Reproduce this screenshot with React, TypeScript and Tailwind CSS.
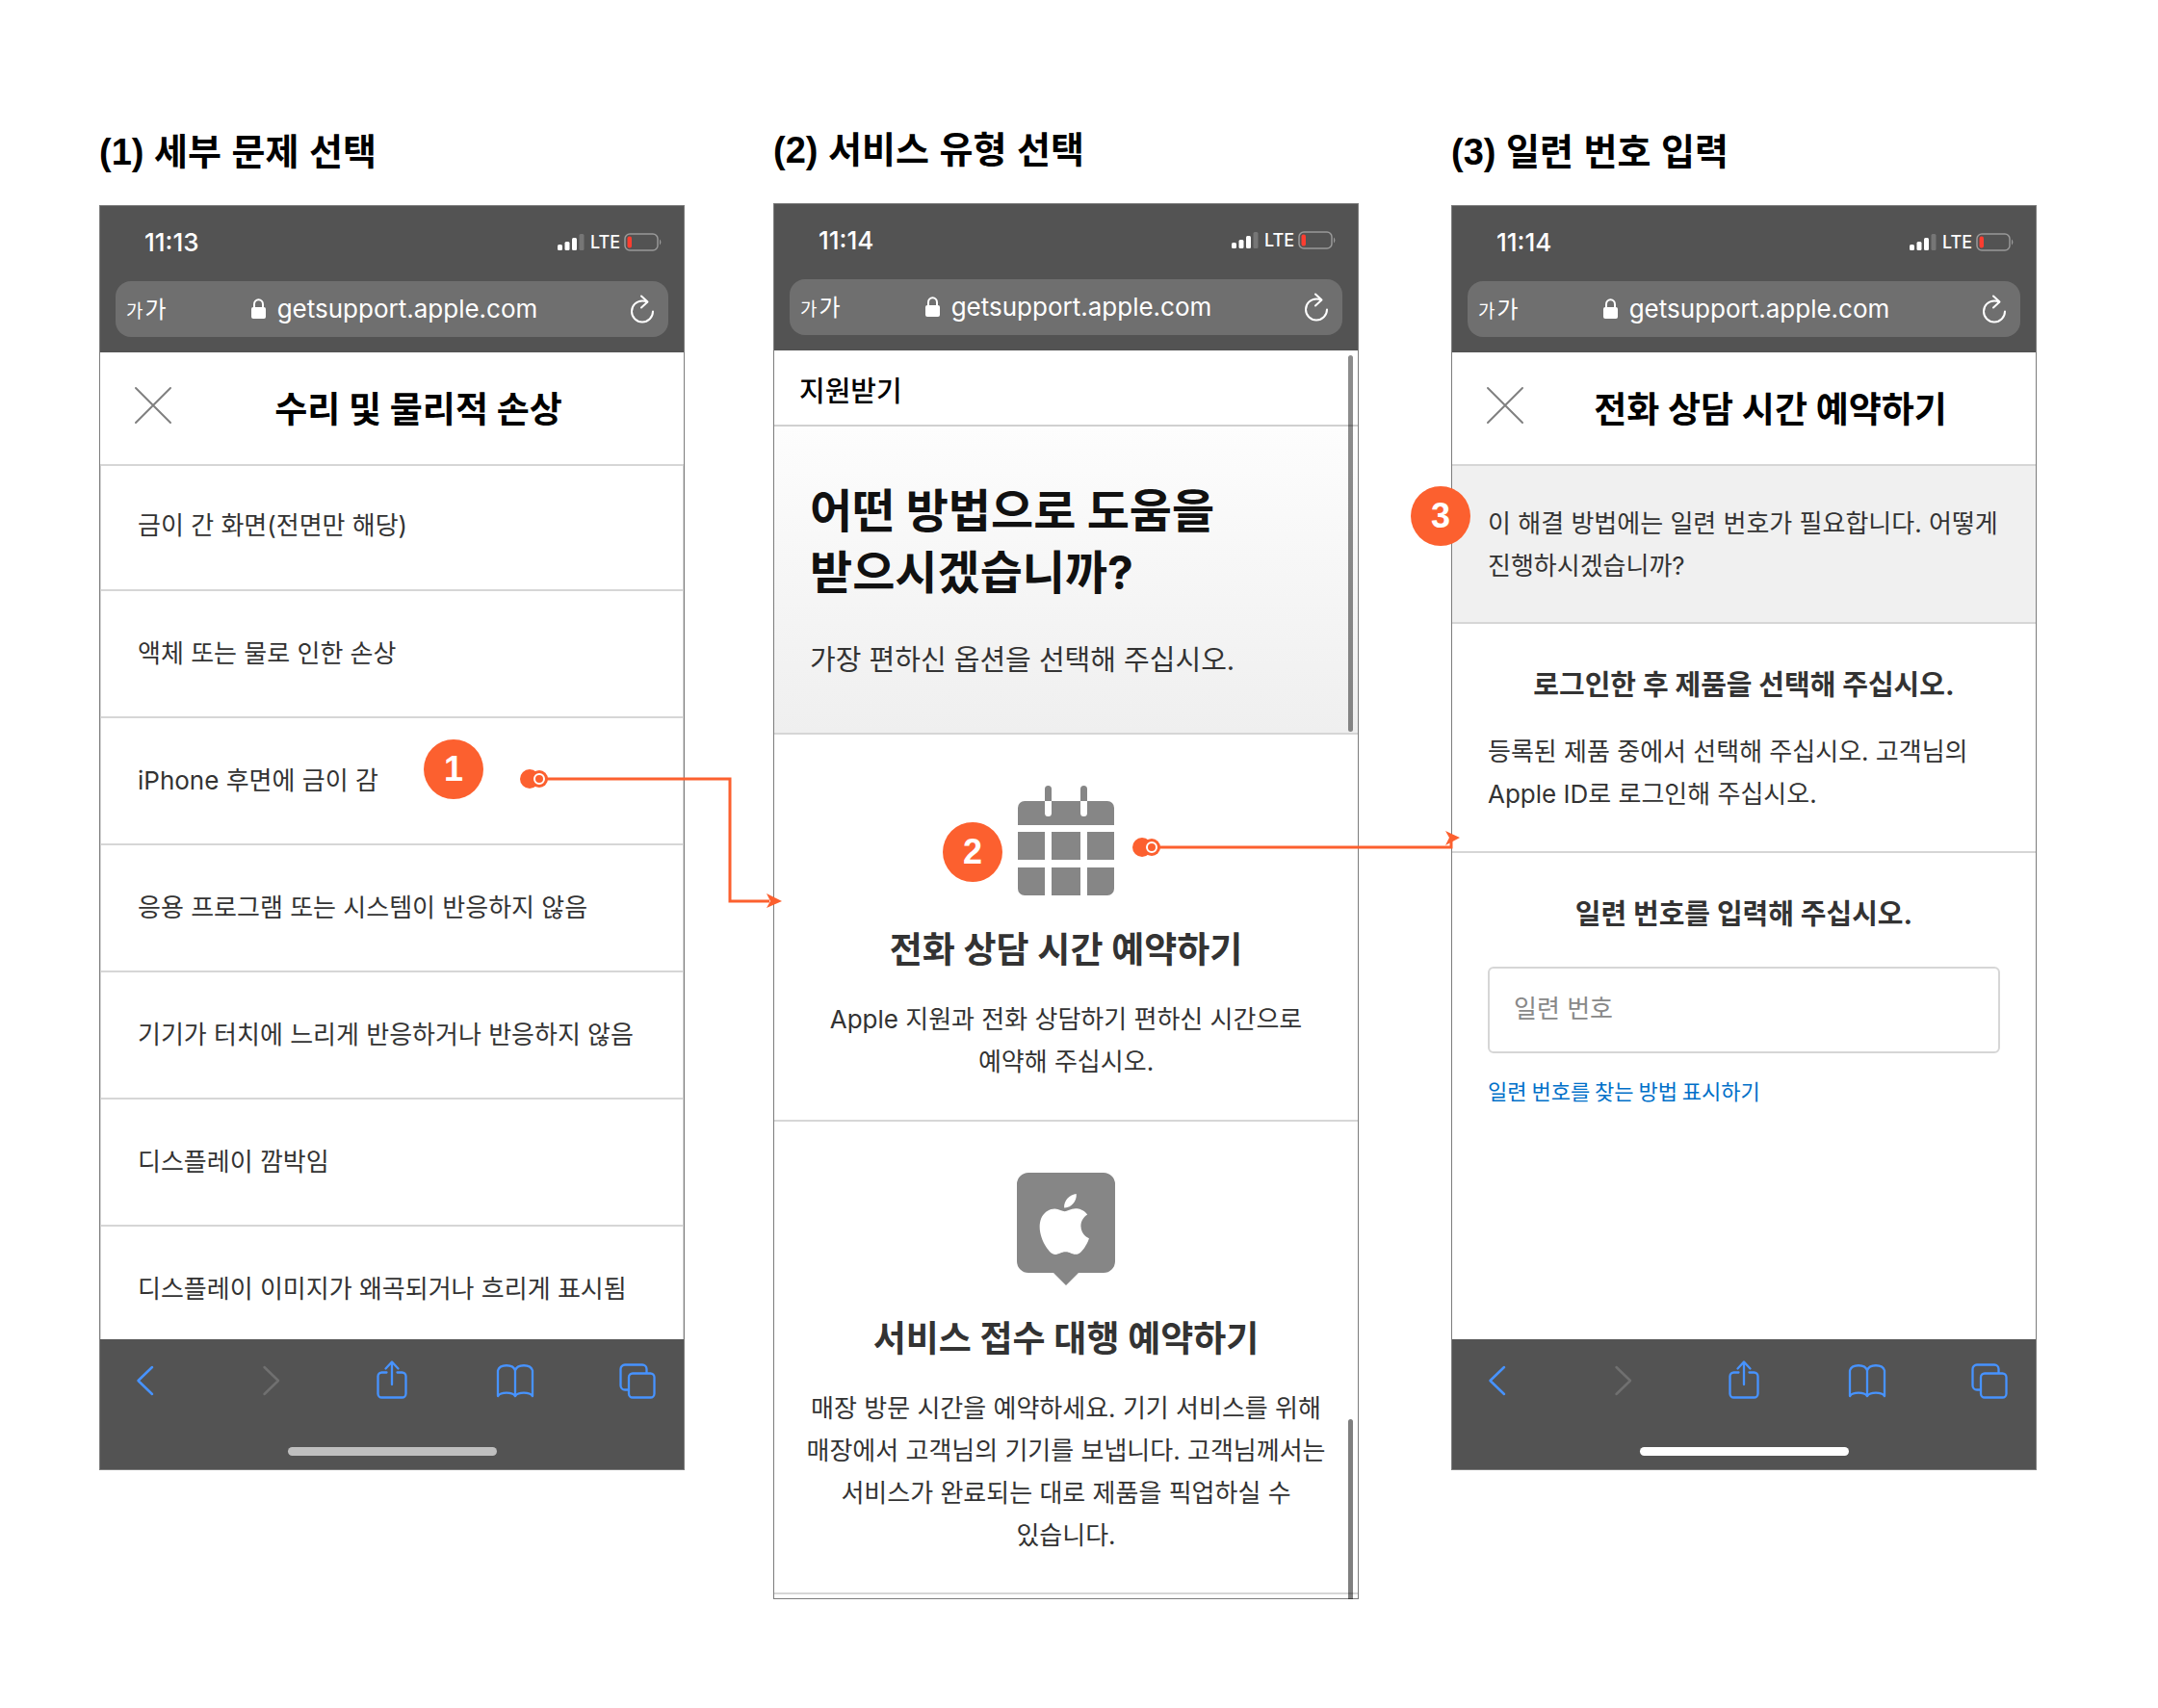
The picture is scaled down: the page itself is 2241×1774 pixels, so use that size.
import type { ReactNode } from "react";

type PhoneProps = { time: string; children: ReactNode };

function SignalIcon() {
  return (
    <svg width="28" height="18" viewBox="0 0 28 18" fill="#fff" aria-hidden="true">
      <rect x="0" y="11" width="5" height="6" rx="1.5" />
      <rect x="7.5" y="8" width="5" height="9" rx="1.5" />
      <rect x="15" y="4" width="5" height="13" rx="1.5" />
      <rect x="22.5" y="0" width="5" height="17" rx="1.5" fill="#767676" />
    </svg>
  );
}

function BatteryIcon() {
  return (
    <svg width="40" height="20" viewBox="0 0 40 20" aria-hidden="true">
      <rect x="1" y="1" width="34" height="17" rx="5" fill="none" stroke="#999" strokeWidth="1.5" />
      <rect x="3.5" y="3.5" width="4.5" height="12" rx="2" fill="#fc3d30" />
      <path d="M37 6.5a4 4 0 0 1 0 6z" fill="#999" />
    </svg>
  );
}

function LockIcon() {
  return (
    <svg width="15" height="22" viewBox="0 0 15 22" aria-hidden="true">
      <rect x="0" y="9" width="15" height="12" rx="2" fill="#fff" />
      <path d="M3 10V6a4.5 4.8 0 0 1 9 0v4" fill="none" stroke="#fff" strokeWidth="2" />
    </svg>
  );
}

function ReloadIcon() {
  return (
    <svg width="26" height="30" viewBox="0 0 26 30" fill="none" stroke="#fff" strokeWidth="2" strokeLinecap="round" strokeLinejoin="round" aria-hidden="true">
      <path d="M18 7.6C16.6 6.8 14.8 6.4 13 6.4A11 11 0 1 0 24 17.4" />
      <path d="M12 1.5L18.5 7.6L12 13.5" />
    </svg>
  );
}

function CloseButton() {
  return (
    <button type="button" aria-label="닫기" className="shrink-0">
      <svg width="40" height="40" viewBox="0 0 40 40" fill="none" stroke="#808080" strokeWidth="2" strokeLinecap="round">
        <path d="M2 2L38 38M38 2L2 38" />
      </svg>
    </button>
  );
}

function BrowserBar({ time }: { time: string }) {
  return (
    <header className="bg-[#535353] px-4 pb-4 pt-[22px] text-white">
      <div className="flex h-8 items-center justify-between pl-[30px] pr-[6px]">
        <span className="text-[26px] font-medium leading-8">{time}</span>
        <span className="flex items-center gap-[6px]">
          <SignalIcon />
          <span className="w-[29px] text-[18px] font-medium leading-8">LTE</span>
          <BatteryIcon />
        </span>
      </div>
      <div className="mt-[24px] flex h-[58px] items-center justify-between rounded-2xl bg-[#6f6f6f] pl-[11px] pr-[14px]">
        <button type="button" className="flex w-12 items-baseline gap-[2px] pt-1 leading-8" aria-label="텍스트 크기">
          <span className="text-[19px]">가</span>
          <span className="text-[24px]">가</span>
        </button>
        <span className="flex items-center gap-3">
          <LockIcon />
          <span className="text-[26px] leading-8">getsupport.apple.com</span>
        </span>
        <button type="button" aria-label="새로 고침" className="flex w-10 justify-end">
          <ReloadIcon />
        </button>
      </div>
    </header>
  );
}

function Toolbar({ dimmed = false }: { dimmed?: boolean }) {
  return (
    <footer className="h-[135px] bg-[#535353] pt-[18px]">
      <nav className="flex items-center justify-between px-7">
        <button type="button" aria-label="뒤로" className="flex w-10 justify-center">
          <svg width="22" height="48" viewBox="0 0 22 48" fill="none" stroke="#4793ff" strokeWidth="2.5" strokeLinecap="round" strokeLinejoin="round">
            <path d="M17 11L2.5 25L17 39" />
          </svg>
        </button>
        <button type="button" aria-label="앞으로" className="flex w-10 justify-center" disabled>
          <svg width="24" height="48" viewBox="0 0 24 48" fill="none" stroke="#707070" strokeWidth="2.5" strokeLinecap="round" strokeLinejoin="round">
            <path d="M6.5 11L21 25L6.5 39" />
          </svg>
        </button>
        <button type="button" aria-label="공유" className="flex w-10 justify-center">
          <svg width="32" height="48" viewBox="0 0 32 48" fill="none" stroke="#4793ff" strokeWidth="2.3" strokeLinecap="round" strokeLinejoin="round">
            <path d="M10.5 16.5H5.5A4 4 0 0 0 1.5 20.5V38.5A4 4 0 0 0 5.5 42.5H26.5A4 4 0 0 0 30.5 38.5V20.5A4 4 0 0 0 26.5 16.5H21.5" />
            <path d="M16 29V6M9.5 12.5L16 5.5L22.5 12.5" />
          </svg>
        </button>
        <button type="button" aria-label="책갈피" className="flex w-10 justify-center">
          <svg width="40" height="48" viewBox="0 0 40 48" fill="none" stroke="#4793ff" strokeWidth="2.3" strokeLinecap="round" strokeLinejoin="round">
            <path d="M20 14.5C18 7.5 4 7.5 2 14.5V41C5 36.5 17 36.5 20 41C23 36.5 35 36.5 38 41V14.5C36 7.5 22 7.5 20 14.5V41" />
          </svg>
        </button>
        <button type="button" aria-label="탭" className="flex w-10 justify-center">
          <svg width="38" height="48" viewBox="0 0 38 48" fill="none" stroke="#4793ff" strokeWidth="2.3" strokeLinejoin="round">
            <rect x="10" y="17.5" width="26.5" height="25" rx="4" />
            <path d="M10 34.5H6A4.5 4.5 0 0 1 1.5 30V13A4.5 4.5 0 0 1 6 8.5H24A4.5 4.5 0 0 1 28.5 13V17.5" />
          </svg>
        </button>
      </nav>
      <div className={`mx-auto mt-[46px] h-[9px] w-[217px] rounded-full ${dimmed ? "bg-[#bfbfbf]" : "bg-white"}`} />
    </footer>
  );
}

function Phone({ time, children }: PhoneProps) {
  return (
    <div className="overflow-hidden border border-[#7d7d7d] bg-white font-['Inter','Noto_Sans_CJK_KR',sans-serif] text-[#333]">
      <BrowserBar time={time} />
      {children}
    </div>
  );
}

function SheetHeader({ title }: { title: string }) {
  return (
    <div className="flex h-[118px] items-center border-b-2 border-[#d6d6d6] pb-[6px] pl-[35px] pr-5">
      <CloseButton />
      <h3 className="flex-1 pt-[10px] text-center text-[37px] font-bold leading-[44px] text-black">{title}</h3>
    </div>
  );
}

function Badge({ n, className }: { n: number; className: string }) {
  return (
    <span
      className={`absolute flex h-[62px] w-[62px] items-center justify-center rounded-full bg-[#fc602f] font-['Liberation_Sans',sans-serif] text-[36px] font-bold text-white ${className}`}
    >
      {n}
    </span>
  );
}

const ISSUES = [
  "금이 간 화면(전면만 해당)",
  "액체 또는 물로 인한 손상",
  "iPhone 후면에 금이 감",
  "응용 프로그램 또는 시스템이 반응하지 않음",
  "기기가 터치에 느리게 반응하거나 반응하지 않음",
  "디스플레이 깜박임",
  "디스플레이 이미지가 왜곡되거나 흐리게 표시됨",
];

function CalendarIcon() {
  return (
    <svg width="102" height="116" viewBox="0 0 102 116" fill="#868686" aria-hidden="true">
      <path d="M1 42V24a7 7 0 0 1 7-7H94a7 7 0 0 1 7 7V42z" />
      <path d="M1 49H29V78H1zM36 49H66V78H36zM73 49H101V78H73zM36 86H66V115H36z" />
      <path d="M1 86H29V115H8a7 7 0 0 1-7-7zM73 86H101V108a7 7 0 0 1-7 7H73z" />
      <path d="M29 17V4.5a3.5 3.5 0 0 1 7 0V17zM66 17V4.5a3.5 3.5 0 0 1 7 0V17z" />
      <path d="M29 17H36V29.5a3.5 3.5 0 0 1-7 0zM66 17H73V29.5a3.5 3.5 0 0 1-7 0z" fill="#fff" />
    </svg>
  );
}

function StoreIcon() {
  return (
    <svg width="104" height="117" viewBox="0 0 104 117" aria-hidden="true">
      <path d="M13 0H91a12 12 0 0 1 12 12V92a12 12 0 0 1-12 12H65L52 117L39 104H13A12 12 0 0 1 1 92V12A12 12 0 0 1 13 0z" fill="#868686" />
      <g transform="translate(21.6 18.4) scale(2.9)" fill="#fff">
        <path d="M15.8 12.77c-.03-2.74 2.24-4.05 2.34-4.12-1.27-1.86-3.26-2.12-3.96-2.15-1.69-.17-3.3 1-4.15 1-.86 0-2.18-.97-3.58-.95-1.84.03-3.54 1.07-4.49 2.72-1.91 3.32-.49 8.24 1.38 10.93.91 1.32 2 2.8 3.43 2.75 1.38-.06 1.9-.89 3.56-.89s2.13.89 3.59.86c1.48-.03 2.42-1.35 3.33-2.67 1.05-1.53 1.48-3.02 1.5-3.09-.03-.02-2.88-1.11-2.95-4.39z" />
        <path d="M13.06 4.72c.76-.92 1.27-2.2 1.13-3.47-1.09.04-2.42.73-3.2 1.64-.7.81-1.32 2.12-1.15 3.36 1.22.1 2.46-.62 3.22-1.53z" />
      </g>
    </svg>
  );
}

function IssueScreen() {
  return (
    <Phone time="11:13">
      <SheetHeader title="수리 및 물리적 손상" />
      <ul className="h-[907px] overflow-hidden border-x border-[#d6d6d6]">
        {ISSUES.map((issue) => (
          <li key={issue} className="h-[132px] border-b-2 border-[#d6d6d6] first:h-[130px] first:pb-1">
            <button type="button" className="flex h-full w-full items-center pl-[38px] text-left text-[26px] leading-[44px]">
              {issue}
            </button>
          </li>
        ))}
      </ul>
      <Toolbar dimmed />
    </Phone>
  );
}

function ServiceScreen() {
  return (
    <Phone time="11:14">
      <div className="flex h-[79px] items-center border-b-2 border-[#d0d0d0] pl-[26px] pt-2">
        <h3 className="text-[29px] font-medium leading-[44px] text-black">지원받기</h3>
      </div>
      <div className="h-[320px] border-b-2 border-[#d6d6d6] bg-linear-to-b from-[#fdfdfd] to-[#efefef] px-[37px] pt-[56px]">
        <h4 className="text-[48px] font-bold leading-[64px] text-[#111]">
          어떤 방법으로 도움을
          <br />
          받으시겠습니까?
        </h4>
        <p className="mt-[37px] text-[29px] leading-[44px]">가장 편하신 옵션을 선택해 주십시오.</p>
      </div>
      <div className="flex h-[402px] flex-col items-center border-b-2 border-[#d6d6d6] pt-[52px] text-center">
        <CalendarIcon />
        <h4 className="mt-[34px] text-[37px] font-bold leading-[44px]">전화 상담 시간 예약하기</h4>
        <p className="mt-[28px] text-[26px] leading-[44px]">
          Apple 지원과 전화 상담하기 편하신 시간으로
          <br />
          예약해 주십시오.
        </p>
      </div>
      <div className="flex h-[491px] flex-col items-center border-b-2 border-[#d6d6d6] pt-[53px] text-center">
        <StoreIcon />
        <h4 className="mt-[34px] text-[37px] font-bold leading-[44px]">서비스 접수 대행 예약하기</h4>
        <p className="mt-[28px] text-[26px] leading-[44px]">
          매장 방문 시간을 예약하세요. 기기 서비스를 위해
          <br />
          매장에서 고객님의 기기를 보냅니다. 고객님께서는
          <br />
          서비스가 완료되는 대로 제품을 픽업하실 수
          <br />
          있습니다.
        </p>
      </div>
      <div className="h-1" />
    </Phone>
  );
}

function SerialScreen() {
  return (
    <Phone time="11:14">
      <SheetHeader title="전화 상담 시간 예약하기" />
      <p className="h-[164px] border-b-2 border-[#d6d6d6] bg-[#f0f0f0] px-[37px] pt-[38px] text-[26px] leading-[44px]">
        이 해결 방법에는 일련 번호가 필요합니다. 어떻게
        <br />
        진행하시겠습니까?
      </p>
      <div className="h-[238px] border-b-2 border-[#d6d6d6] px-[37px] pt-[42px]">
        <h4 className="text-center text-[29px] font-bold leading-[44px]">로그인한 후 제품을 선택해 주십시오.</h4>
        <p className="mt-[25px] text-[26px] leading-[44px]">
          등록된 제품 중에서 선택해 주십시오. 고객님의
          <br />
          Apple ID로 로그인해 주십시오.
        </p>
      </div>
      <form className="flex h-[505px] flex-col items-start px-[37px] pt-[42px]">
        <label htmlFor="serial" className="self-center text-[29px] font-bold leading-[44px]">
          일련 번호를 입력해 주십시오.
        </label>
        <input
          id="serial"
          type="text"
          placeholder="일련 번호"
          className="mt-[32px] h-[90px] w-full rounded-md border-2 border-[#d6d6d6] px-[25px] pb-1 text-[26px] placeholder:text-[#888]"
        />
        <a href="#serial" className="mt-[16px] text-[22px] leading-[44px] text-[#0070c9] font-['Noto_Sans_CJK_KR',sans-serif]">
          일련 번호를 찾는 방법 표시하기
        </a>
      </form>
      <Toolbar />
    </Phone>
  );
}

function StepTitle({ children }: { children: ReactNode }) {
  return (
    <h2 className="mb-[33px] text-[38px] font-bold leading-[44px] text-black font-['Liberation_Sans','Noto_Sans_CJK_KR',sans-serif]">
      {children}
    </h2>
  );
}

export default function App() {
  return (
    <main className="flex items-start bg-white pb-28 pl-[103px] pr-[126px] pt-[134px]">
      <section className="flex-1 pt-[2px]">
        <StepTitle>(1) 세부 문제 선택</StepTitle>
        <div className="relative">
          <IssueScreen />
          <Badge n={1} className="right-[209px] top-[555px]" />
          {/* connector from the cracked-back row to the service screen */}
          <svg className="absolute -right-[102px] top-[579px] z-10" width="276" height="160" viewBox="0 0 276 160" fill="none" aria-hidden="true">
            <path d="M29 17H221V144H262" stroke="#fc602f" strokeWidth="3" />
            <circle cx="13" cy="17" r="10" fill="#fc602f" />
            <circle cx="23" cy="17" r="9" fill="#fc602f" />
            <circle cx="23" cy="17" r="5" fill="#fc602f" stroke="#fff" strokeWidth="2" />
            <path d="M259 136L275 144L259 151L263 144z" fill="#fc602f" />
          </svg>
        </div>
      </section>

      <section className="ml-[92px] flex-1">
        <StepTitle>(2) 서비스 유형 선택</StepTitle>
        <div className="relative">
          <ServiceScreen />
          <span className="absolute right-[6px] top-[158px] h-[391px] w-[5px] rounded-full bg-black/45" />
          <span className="absolute bottom-0 right-[6px] h-[187px] w-[5px] rounded-t-full bg-black/50" />
          <Badge n={2} className="right-[370px] top-[643px]" />
          {/* connector from the call option to the serial number screen */}
          <svg className="absolute -right-[106px] top-[650px] z-10" width="342" height="36" viewBox="0 0 342 36" fill="none" aria-hidden="true">
            <path d="M27 19H332V9" stroke="#fc602f" strokeWidth="3" />
            <circle cx="11" cy="19" r="10" fill="#fc602f" />
            <circle cx="21" cy="19" r="9" fill="#fc602f" />
            <circle cx="21" cy="19" r="5" fill="#fc602f" stroke="#fff" strokeWidth="2" />
            <path d="M326 2L341 9L326 17L330 9z" fill="#fc602f" />
          </svg>
        </div>
      </section>

      <section className="ml-[96px] flex-1 pt-[2px]">
        <StepTitle>(3) 일련 번호 입력</StepTitle>
        <div className="relative">
          <SerialScreen />
          <Badge n={3} className="-left-[42px] top-[292px]" />
        </div>
      </section>
    </main>
  );
}
